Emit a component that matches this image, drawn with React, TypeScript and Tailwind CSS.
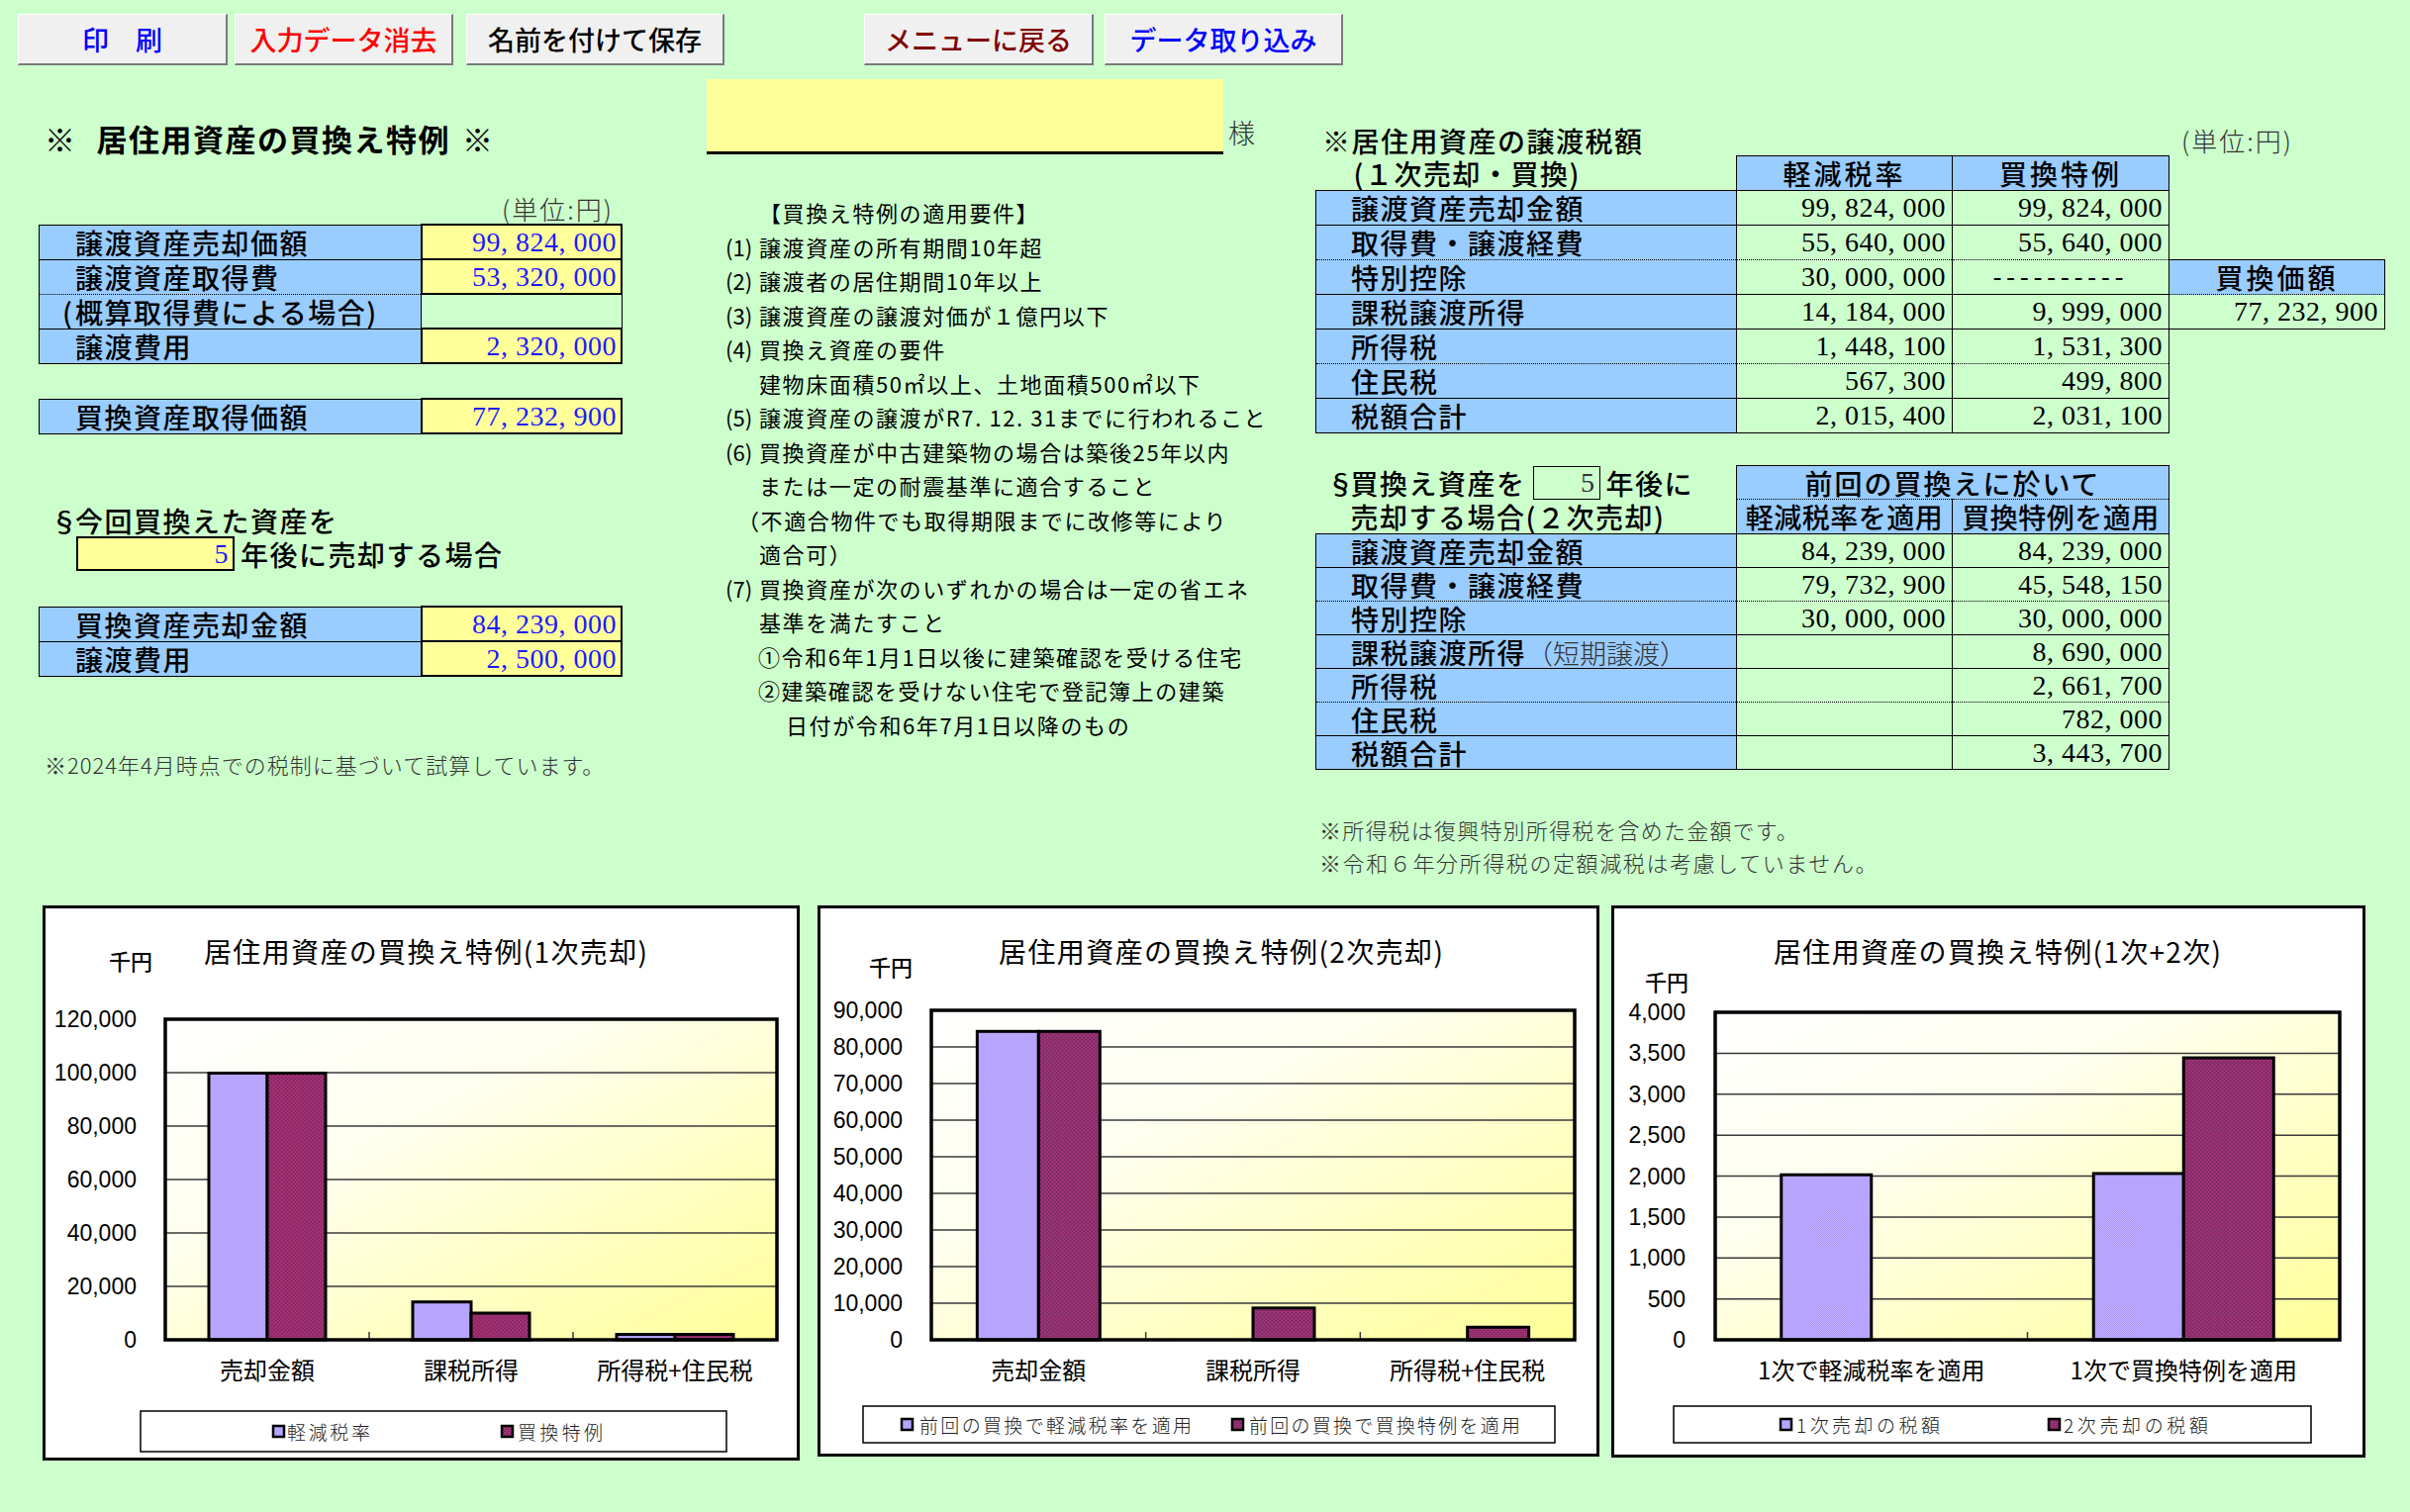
import React from 'react';

const LBL = "bg-[#99ccff] border border-black text-[28px] font-medium leading-none tracking-[1.5px] whitespace-nowrap text-left";
const NUM = "font-['Liberation_Serif','Noto_Sans_CJK_JP',serif] text-[28px] leading-none tracking-[0.5px] text-right whitespace-nowrap";
const BLUEVAL = `bg-[#ffff99] border-2 border-black pr-[4px] text-[#1a1aff] ${NUM}`;
const HDR = "bg-[#99ccff] border border-black text-center text-[28px] font-medium leading-none whitespace-nowrap";
const NOTE = "text-[22px] font-light text-[#333] whitespace-nowrap";

const buttons = [
  { label: '印　刷', cls: 'ml-[18px] w-[212px] text-[#0000ff]' },
  { label: '入力データ消去', cls: 'ml-[7px] w-[221px] text-[#ff0000]' },
  { label: '名前を付けて保存', cls: 'ml-[13px] w-[261px] text-black' },
  { label: 'メニューに戻る', cls: 'ml-[141px] w-[232px] text-[#800000]' },
  { label: 'データ取り込み', cls: 'ml-[11px] w-[241px] text-[#0000ff]' },
];

function LeftColumn() {
  return (
    <div className="ml-[39px] w-[590px] shrink-0">
      <div className="mt-[56px] h-[36px] leading-[36px] pl-[6px] text-[31px] font-bold tracking-[1.5px] whitespace-nowrap">
        <span className="mr-[20px]">※</span>居住用資産の買換え特例<span className="ml-[12px]">※</span>
      </div>
      <div className="mt-[41px] h-[24px] leading-[24px] text-right pr-[9px] text-[26px] font-light tracking-[2px] text-[#333]">(単位:円)</div>
      <table className="mt-[3px] w-[590px] table-fixed">
        <colgroup><col className="w-[386px]" /><col /></colgroup>
        <tbody>
          <tr className="h-[35px]"><td className={`${LBL} pl-[36px]`}>譲渡資産売却価額</td><td className={BLUEVAL}>99, 824, 000</td></tr>
          <tr className="h-[35px]"><td className={`${LBL} pl-[36px] [border-bottom-style:dotted]!`}>譲渡資産取得費</td><td className={BLUEVAL}>53, 320, 000</td></tr>
          <tr className="h-[35px]">
            <td className={`${LBL} pl-[23px] [border-top-style:dotted]!`}><span className="inline-block w-[13px]">(</span>概算取得費による場合)</td>
            <td className="border border-black"></td>
          </tr>
          <tr className="h-[35px]"><td className={`${LBL} pl-[36px]`}>譲渡費用</td><td className={BLUEVAL}>2, 320, 000</td></tr>
        </tbody>
      </table>
      <table className="mt-[34px] w-[590px] table-fixed">
        <colgroup><col className="w-[386px]" /><col /></colgroup>
        <tbody>
          <tr className="h-[35px]"><td className={`${LBL} pl-[36px]`}>買換資産取得価額</td><td className={BLUEVAL}>77, 232, 900</td></tr>
        </tbody>
      </table>
      <div className="mt-[72px] h-[31px] leading-[31px] pl-[12px] text-[28px] font-medium tracking-[1.5px] whitespace-nowrap">
        <span className="inline-block w-[25px]">§</span>今回買換えた資産を
      </div>
      <div className="flex items-center h-[35px] pl-[38px]">
        <div className={`w-[160px] h-[35px] flex items-center justify-end bg-[#ffff99] border-2 border-black pr-[4px] text-[#1a1aff] ${NUM}`}>5</div>
        <span className="ml-[6px] text-[28px] font-medium tracking-[1.5px] whitespace-nowrap">年後に売却する場合</span>
      </div>
      <table className="mt-[35px] w-[590px] table-fixed">
        <colgroup><col className="w-[386px]" /><col /></colgroup>
        <tbody>
          <tr className="h-[35px]"><td className={`${LBL} pl-[36px]`}>買換資産売却金額</td><td className={BLUEVAL}>84, 239, 000</td></tr>
          <tr className="h-[35px]"><td className={`${LBL} pl-[36px]`}>譲渡費用</td><td className={BLUEVAL}>2, 500, 000</td></tr>
        </tbody>
      </table>
      <div className={`mt-[76px] h-[24px] leading-[24px] pl-[6px] tracking-[1px] ${NOTE}`}>※2024年4月時点での税制に基づいて試算しています。</div>
    </div>
  );
}

const reqs: { pl: string; num?: string; text: string }[] = [
  { pl: 'pl-[53px]', text: '【買換え特例の適用要件】' },
  { pl: 'pl-[19px]', num: '(1)', text: '譲渡資産の所有期間10年超' },
  { pl: 'pl-[19px]', num: '(2)', text: '譲渡者の居住期間10年以上' },
  { pl: 'pl-[19px]', num: '(3)', text: '譲渡資産の譲渡対価が１億円以下' },
  { pl: 'pl-[19px]', num: '(4)', text: '買換え資産の要件' },
  { pl: 'pl-[53px]', text: '建物床面積50㎡以上、土地面積500㎡以下' },
  { pl: 'pl-[19px]', num: '(5)', text: '譲渡資産の譲渡がR7. 12. 31までに行われること' },
  { pl: 'pl-[19px]', num: '(6)', text: '買換資産が中古建築物の場合は築後25年以内' },
  { pl: 'pl-[53px]', text: 'または一定の耐震基準に適合すること' },
  { pl: 'pl-[31px]', text: '（不適合物件でも取得期限までに改修等により' },
  { pl: 'pl-[53px]', text: '適合可）' },
  { pl: 'pl-[19px]', num: '(7)', text: '買換資産が次のいずれかの場合は一定の省エネ' },
  { pl: 'pl-[53px]', text: '基準を満たすこと' },
  { pl: 'pl-[52px]', text: '①令和6年1月1日以後に建築確認を受ける住宅' },
  { pl: 'pl-[52px]', text: '②建築確認を受けない住宅で登記簿上の建築' },
  { pl: 'pl-[80px]', text: '日付が令和6年7月1日以降のもの' },
];

function MiddleColumn() {
  return (
    <div className="ml-[85px] w-[560px] shrink-0">
      <div className="mt-[14px] flex items-end">
        <div className="w-[522px] h-[76px] bg-[#ffff99] border-b-[3px] border-black" />
        <span className="ml-[5px] mb-[2px] text-[27px] font-light text-[#333] leading-[40px]">様</span>
      </div>
      <div className="mt-[41px]">
        {reqs.map((r, i) => (
          <div key={i} className={`${r.pl} h-[34.5px] leading-[34.5px] text-[22px] tracking-[1.6px] whitespace-nowrap`}>
            {r.num && <span className="inline-block w-[34px] tracking-normal">{r.num}</span>}
            {r.text}
          </div>
        ))}
      </div>
    </div>
  );
}

const t1 = [
  { label: '譲渡資産売却金額', a: '99, 824, 000', b: '99, 824, 000', dotB: false, dotT: false, extra: '' },
  { label: '取得費・譲渡経費', a: '55, 640, 000', b: '55, 640, 000', dotB: true, dotT: false, extra: '' },
  { label: '特別控除', a: '30, 000, 000', b: '----------', dotB: false, dotT: true, extra: 'head' },
  { label: '課税譲渡所得', a: '14, 184, 000', b: '9, 999, 000', dotB: false, dotT: false, extra: 'val' },
  { label: '所得税', a: '1, 448, 100', b: '1, 531, 300', dotB: true, dotT: false, extra: '' },
  { label: '住民税', a: '567, 300', b: '499, 800', dotB: false, dotT: true, extra: '' },
  { label: '税額合計', a: '2, 015, 400', b: '2, 031, 100', dotB: false, dotT: false, extra: '' },
];

const t2 = [
  { label: '譲渡資産売却金額', a: '84, 239, 000', b: '84, 239, 000', dotB: false, dotT: false },
  { label: '取得費・譲渡経費', a: '79, 732, 900', b: '45, 548, 150', dotB: true, dotT: false },
  { label: '特別控除', a: '30, 000, 000', b: '30, 000, 000', dotB: false, dotT: true },
  { label: '課税譲渡所得', a: '', b: '8, 690, 000', dotB: false, dotT: false, sub: '（短期譲渡）' },
  { label: '所得税', a: '', b: '2, 661, 700', dotB: true, dotT: false },
  { label: '住民税', a: '', b: '782, 000', dotB: false, dotT: true },
  { label: '税額合計', a: '', b: '3, 443, 700', dotB: false, dotT: false },
];

function dots(r: { dotB: boolean; dotT: boolean }) {
  return `${r.dotB ? '[border-bottom-style:dotted]!' : ''} ${r.dotT ? '[border-top-style:dotted]!' : ''}`;
}

function RightColumn() {
  const V = `border border-black pr-[6px] ${NUM}`;
  return (
    <div className="ml-[55px] w-[1081px] shrink-0">
      <div className="mt-[61px] h-[30px] flex items-center justify-between">
        <span className="pl-[7px] text-[28px] font-medium tracking-[1.5px] leading-none whitespace-nowrap">※居住用資産の譲渡税額</span>
        <span className="pr-[93px] text-[26px] font-light tracking-[2px] text-[#333] leading-none">(単位:円)</span>
      </div>
      <table className="w-[1081px] table-fixed">
        <colgroup><col className="w-[425px]" /><col className="w-[218px]" /><col className="w-[219px]" /><col /></colgroup>
        <tbody>
          <tr className="h-[35px]">
            <td className="pl-[38px] text-[28px] font-medium leading-none tracking-[1.5px] whitespace-nowrap">(１次売却・買換)</td>
            <td className={`${HDR} tracking-[3px]`}>軽減税率</td>
            <td className={`${HDR} tracking-[3px]`}>買換特例</td>
            <td />
          </tr>
          {t1.map((r) => (
            <tr key={r.label} className="h-[35px]">
              <td className={`${LBL} pl-[35px] ${dots(r)}`}>{r.label}</td>
              <td className={`${V} ${dots(r)}`}>{r.a}</td>
              {r.b.startsWith('-') ? (
                <td className={`border border-black text-center tracking-[5px] font-['Liberation_Serif',serif] text-[26px] leading-none ${dots(r)}`}>{r.b}</td>
              ) : (
                <td className={`${V} ${dots(r)}`}>{r.b}</td>
              )}
              {r.extra === 'head' ? (
                <td className={`${HDR} tracking-[3px] [border-bottom-style:dotted]!`}>買換価額</td>
              ) : r.extra === 'val' ? (
                <td className={`${V} [border-top-style:dotted]!`}>77, 232, 900</td>
              ) : (
                <td />
              )}
            </tr>
          ))}
        </tbody>
      </table>
      <table className="mt-[32px] w-[1081px] table-fixed">
        <colgroup><col className="w-[425px]" /><col className="w-[218px]" /><col className="w-[219px]" /><col /></colgroup>
        <tbody>
          <tr className="h-[34px]">
            <td className="whitespace-nowrap">
              <div className="flex items-center pl-[11px] text-[28px] font-medium leading-none tracking-[1.5px]">
                <span className="inline-block w-[24px]">§</span>
                <span>買換え資産を</span>
                <span className={`ml-[7px] w-[68px] h-[34px] flex items-center justify-end border border-black pr-[4px] text-[#333] ${NUM}`}>5</span>
                <span className="ml-[6px]">年後に</span>
              </div>
            </td>
            <td colSpan={2} className={`${HDR} tracking-[2px] [border-bottom-style:dotted]!`}>前回の買換えに於いて</td>
            <td />
          </tr>
          <tr className="h-[35px]">
            <td className="pl-[35px] text-[28px] font-medium leading-none tracking-[1.5px] whitespace-nowrap">売却する場合(２次売却)</td>
            <td className={`${HDR} tracking-[0.5px] [border-top-style:dotted]!`}>軽減税率を適用</td>
            <td className={`${HDR} tracking-[0.5px] [border-top-style:dotted]!`}>買換特例を適用</td>
            <td />
          </tr>
          {t2.map((r) => (
            <tr key={r.label} className="h-[34px]">
              <td className={`${LBL} pl-[35px] ${dots(r)}`}>
                {r.label}
                {r.sub && <span className="text-[27px] font-light tracking-normal text-[#333]">{r.sub}</span>}
              </td>
              <td className={`${V} ${dots(r)}`}>{r.a}</td>
              <td className={`${V} ${dots(r)}`}>{r.b}</td>
              <td />
            </tr>
          ))}
        </tbody>
      </table>
      <div className={`mt-[44px] pl-[4px] h-[33px] leading-[33px] tracking-[1.2px] ${NOTE}`}>※所得税は復興特別所得税を含めた金額です。</div>
      <div className={`pl-[4px] h-[33px] leading-[33px] tracking-[1.6px] ${NOTE}`}>※令和６年分所得税の定額減税は考慮していません。</div>
    </div>
  );
}

type LegendItem = { mx: number; tx: number; tw: number; text: string; fill: string };
type ChartProps = {
  id: string;
  box: string;
  w: number;
  h: number;
  title: string;
  titleX: number;
  titleW: number;
  unit: { x: number; y: number };
  plot: { x: number; y: number; w: number; h: number };
  max: number;
  step: number;
  axisRight: number;
  barW: number;
  cats: { label: string; vals: [number, number] }[];
  legend: { x: number; y: number; w: number; h: number; items: LegendItem[] };
};

const JP = "'Noto Sans CJK JP', sans-serif";

function Chart(p: ChartProps) {
  const n = Math.round(p.max / p.step);
  const catW = p.plot.w / p.cats.length;
  const base = p.plot.y + p.plot.h;
  const hOf = (v: number) => (v / p.max) * p.plot.h;
  const ly = p.legend.y + p.legend.h / 2;
  const lav = `url(#${p.id}-lav)`;
  const plum = `url(#${p.id}-plum)`;
  return (
    <div className={`${p.box} shrink-0 bg-white border-[3px] border-black`}>
      <svg width={p.w - 6} height={p.h - 6} viewBox={`3 3 ${p.w - 6} ${p.h - 6}`} className="block">
        <defs>
          <linearGradient id={`${p.id}-bg`} x1="0" y1="0" x2="1" y2="1">
            <stop offset="0" stopColor="#ffffff" />
            <stop offset="0.35" stopColor="#fffff0" />
            <stop offset="1" stopColor="#ffff99" />
          </linearGradient>
          <pattern id={`${p.id}-lav`} width="2" height="2" patternUnits="userSpaceOnUse">
            <rect width="2" height="2" fill="#a99cff" />
            <rect width="1" height="1" fill="#c6adff" />
            <rect x="1" y="1" width="1" height="1" fill="#c6adff" />
          </pattern>
          <pattern id={`${p.id}-plum`} width="4" height="4" patternUnits="userSpaceOnUse">
            <rect width="4" height="4" fill="#9b3070" />
            <rect x="1" y="1" width="1" height="1" fill="#5f2260" />
            <rect x="3" y="3" width="1" height="1" fill="#5f2260" />
          </pattern>
        </defs>

        <text x={p.titleX} y={46} dominantBaseline="central" fontFamily={JP} fontSize={28} textLength={p.titleW} lengthAdjust="spacing">
          {p.title}
        </text>
        <text x={p.unit.x} y={p.unit.y} dominantBaseline="central" fontFamily={JP} fontSize={22} fontWeight={500}>
          千円
        </text>

        <rect x={p.plot.x} y={p.plot.y} width={p.plot.w} height={p.plot.h} fill={`url(#${p.id}-bg)`} />
        {Array.from({ length: n + 1 }, (_, k) => {
          const y = base - (k / n) * p.plot.h;
          return (
            <g key={k}>
              {k > 0 && k < n && <line x1={p.plot.x} x2={p.plot.x + p.plot.w} y1={y} y2={y} stroke="#3a3a3a" strokeWidth={1.5} />}
              <text x={p.axisRight} y={y} textAnchor="end" dominantBaseline="central" fontFamily="'Liberation Sans', Arial, sans-serif" fontSize={23}>
                {(k * p.step).toLocaleString('en-US')}
              </text>
            </g>
          );
        })}
        {p.cats.slice(1).map((_, i) => {
          const x = p.plot.x + (i + 1) * catW;
          return <line key={i} x1={x} x2={x} y1={base} y2={base - 8} stroke="#3a3a3a" strokeWidth={1.5} />;
        })}
        {p.cats.map((c, i) => {
          const cx = p.plot.x + (i + 0.5) * catW;
          return (
            <g key={c.label}>
              {c.vals[0] > 0 && (
                <rect x={cx - p.barW} y={base - hOf(c.vals[0])} width={p.barW} height={hOf(c.vals[0])} fill={lav} stroke="#000" strokeWidth={3} />
              )}
              {c.vals[1] > 0 && (
                <rect x={cx} y={base - hOf(c.vals[1])} width={p.barW} height={hOf(c.vals[1])} fill={plum} stroke="#000" strokeWidth={3} />
              )}
              <text x={cx} y={468} textAnchor="middle" dominantBaseline="central" fontFamily={JP} fontSize={24}>
                {c.label}
              </text>
            </g>
          );
        })}
        <rect x={p.plot.x} y={p.plot.y} width={p.plot.w} height={p.plot.h} fill="none" stroke="#000" strokeWidth={3.5} />

        <rect x={p.legend.x} y={p.legend.y} width={p.legend.w} height={p.legend.h} fill="#fff" stroke="#000" strokeWidth={1.5} />
        {p.legend.items.map((it) => (
          <g key={it.text}>
            <rect x={it.mx} y={ly - 5.5} width={11} height={11} fill={it.fill === 'lav' ? lav : plum} stroke="#000" strokeWidth={2.5} />
            <text x={it.tx} y={ly} dominantBaseline="central" fontFamily={JP} fontSize={19} fontWeight={300} fill="#222" textLength={it.tw} lengthAdjust="spacing">
              {it.text}
            </text>
          </g>
        ))}
      </svg>
    </div>
  );
}

const charts: ChartProps[] = [
  {
    id: 'c1',
    box: 'ml-[43px] w-[765px] h-[561px]',
    w: 765,
    h: 561,
    title: '居住用資産の買換え特例(1次売却)',
    titleX: 163,
    titleW: 448,
    unit: { x: 67, y: 55 },
    plot: { x: 124, y: 115, w: 618, h: 324 },
    max: 120000,
    step: 20000,
    axisRight: 95,
    barW: 59,
    cats: [
      { label: '売却金額', vals: [99824, 99824] },
      { label: '課税所得', vals: [14184, 9999] },
      { label: '所得税+住民税', vals: [2015.4, 2031.1] },
    ],
    legend: {
      x: 99, y: 511, w: 592, h: 41,
      items: [
        { mx: 233, tx: 247, tw: 84, text: '軽減税率', fill: 'lav' },
        { mx: 464, tx: 480, tw: 86, text: '買換特例', fill: 'plum' },
      ],
    },
  },
  {
    id: 'c2',
    box: 'ml-[18px] w-[790px] h-[557px]',
    w: 790,
    h: 557,
    title: '居住用資産の買換え特例(2次売却)',
    titleX: 183,
    titleW: 449,
    unit: { x: 52, y: 61 },
    plot: { x: 115, y: 106, w: 650, h: 333 },
    max: 90000,
    step: 10000,
    axisRight: 86,
    barW: 62,
    cats: [
      { label: '売却金額', vals: [84239, 84239] },
      { label: '課税所得', vals: [0, 8690] },
      { label: '所得税+住民税', vals: [0, 3443.7] },
    ],
    legend: {
      x: 46, y: 506, w: 699, h: 37,
      items: [
        { mx: 85, tx: 103, tw: 275, text: '前回の買換で軽減税率を適用', fill: 'lav' },
        { mx: 419, tx: 436, tw: 274, text: '前回の買換で買換特例を適用', fill: 'plum' },
      ],
    },
  },
  {
    id: 'c3',
    box: 'ml-[12px] w-[762px] h-[558px]',
    w: 762,
    h: 558,
    title: '居住用資産の買換え特例(1次+2次)',
    titleX: 164,
    titleW: 452,
    unit: { x: 34, y: 76 },
    plot: { x: 105, y: 108, w: 631, h: 331 },
    max: 4000,
    step: 500,
    axisRight: 75,
    barW: 91,
    cats: [
      { label: '1次で軽減税率を適用', vals: [2015.4, 0] },
      { label: '1次で買換特例を適用', vals: [2031.1, 3443.7] },
    ],
    legend: {
      x: 63, y: 506, w: 644, h: 37,
      items: [
        { mx: 171, tx: 187, tw: 145, text: '1次売却の税額', fill: 'lav' },
        { mx: 442, tx: 457, tw: 146, text: '2次売却の税額', fill: 'plum' },
      ],
    },
  },
];

export default function App() {
  return (
    <div className="w-[2435px] h-[1528px] overflow-hidden bg-[#ccffcc] text-black font-['Noto_Sans_CJK_JP',sans-serif]">
      {/* toolbar */}
      <div className="flex h-[66px] pt-[14px]">
        {buttons.map((b) => (
          <button
            key={b.label}
            className={`${b.cls} h-[52px] shrink-0 flex items-center justify-center bg-[#f0f0f0] border-t border-l border-t-white border-l-white border-r-2 border-b-2 border-r-[#7a7a7a] border-b-[#7a7a7a] text-[27px] font-medium leading-none whitespace-nowrap`}
          >
            {b.label}
          </button>
        ))}
      </div>

      <div className="flex items-start h-[849px]">
        <LeftColumn />
        <MiddleColumn />
        <RightColumn />
      </div>

      {/* charts */}
      <div className="flex items-start">
        {charts.map((c) => (
          <Chart key={c.id} {...c} />
        ))}
      </div>
    </div>
  );
}
